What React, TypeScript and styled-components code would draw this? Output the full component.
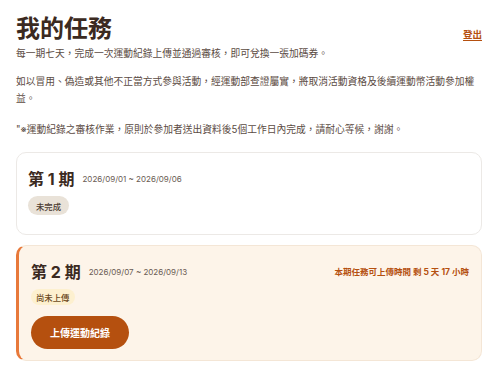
import React from "react";
import styled, { createGlobalStyle } from "styled-components";

const GlobalStyle = createGlobalStyle`
  html, body {
    margin: 0;
    padding: 0;
    background: #ffffff;
  }
  body {
    font-family: Inter, "Noto Sans CJK TC", sans-serif;
    -webkit-font-smoothing: antialiased;
  }
`;

const Page = styled.main`
  width: 500px;
  box-sizing: border-box;
  padding: 13px 18px 0 16px;
`;

const Header = styled.header`
  display: flex;
  justify-content: space-between;
  align-items: flex-end;
`;

const Title = styled.h1`
  margin: 0;
  font-size: 24px;
  line-height: 31px;
  font-weight: 700;
  color: #3b2a21;
`;

const Logout = styled.a`
  font-size: 9.5px;
  font-weight: 700;
  color: #b5500f;
  text-decoration: underline;
  text-underline-offset: 2px;
  margin-bottom: 3px;
  cursor: pointer;
`;

const Note = styled.p<{ $gap: number }>`
  margin: ${(p) => p.$gap}px 0 0;
  font-size: 9.75px;
  line-height: 17px;
  color: #5b4b43;
`;

const Card = styled.section<{ $active?: boolean }>`
  margin-top: ${(p) => (p.$active ? 10 : 14)}px;
  border-radius: 10px;
  box-sizing: border-box;
  padding: ${(p) => (p.$active ? "13px 12px 11px 12px" : "13px 12px 19px 11px")};
  border: 1px solid ${(p) => (p.$active ? "#f4e6d6" : "#ece9e6")};
  border-left: ${(p) => (p.$active ? "3px solid #e8793a" : "1px solid #ece9e6")};
  background: ${(p) => (p.$active ? "#fdf4e9" : "#ffffff")};
  display: flex;
  flex-direction: column;
  align-items: flex-start;
`;

const CardHead = styled.div`
  align-self: stretch;
  display: flex;
  align-items: center;
  height: 24px;
`;

const Period = styled.h2`
  margin: 0;
  font-size: 16px;
  font-weight: 700;
  color: #3b2a21;
  white-space: pre;
`;

const Dates = styled.span`
  margin-left: 8px;
  margin-top: 2px;
  font-size: 8px;
  color: #6a5b53;
`;

const Remaining = styled.span`
  margin-left: auto;
  font-size: 8.5px;
  font-weight: 700;
  color: #b5500f;
`;

const Badge = styled.span<{ $tone: "done" | "pending" }>`
  margin-top: 6px;
  display: inline-flex;
  align-items: center;
  height: ${(p) => (p.$tone === "done" ? 19 : 16)}px;
  padding: 0 ${(p) => (p.$tone === "done" ? 8 : 5)}px;
  border-radius: 10px;
  font-size: 8.4px;
  font-weight: 500;
  background: ${(p) => (p.$tone === "done" ? "#e9e2d8" : "#fdf0cf")};
  color: ${(p) => (p.$tone === "done" ? "#4a3a31" : "#6b4a1c")};
`;

const UploadButton = styled.button`
  margin-top: 11px;
  height: 33px;
  padding: 0 19px;
  border: none;
  border-radius: 17px;
  background: #b5500f;
  color: #ffffff;
  font-family: Inter, "Noto Sans CJK TC", sans-serif;
  font-size: 10px;
  font-weight: 700;
  cursor: pointer;
`;

const periods = [
  { no: 1, range: "2026/09/01 ~ 2026/09/06", status: "未完成", active: false },
  { no: 2, range: "2026/09/07 ~ 2026/09/13", status: "尚未上傳", active: true },
];

export default function App() {
  return (
    <>
      <GlobalStyle />
      <Page>
        <Header>
          <Title>我的任務</Title>
          <Logout>登出</Logout>
        </Header>
        <Note $gap={1}>每一期七天，完成一次運動紀錄上傳並通過審核，即可兌換一張加碼券。</Note>
        <Note $gap={11}>
          如以冒用、偽造或其他不正當方式參與活動，經運動部查證屬實，將取消活動資格及後續運動幣活動參加權益。
        </Note>
        <Note $gap={14}>"※運動紀錄之審核作業，原則於參加者送出資料後5個工作日內完成，請耐心等候，謝謝。</Note>
        {periods.map((p) => (
          <Card key={p.no} $active={p.active}>
            <CardHead>
              <Period>{`第 ${p.no} 期`}</Period>
              <Dates>{p.range}</Dates>
              {p.active && <Remaining>本期任務可上傳時間 剩 5 天 17 小時</Remaining>}
            </CardHead>
            <Badge $tone={p.active ? "pending" : "done"}>{p.status}</Badge>
            {p.active && <UploadButton>上傳運動紀錄</UploadButton>}
          </Card>
        ))}
      </Page>
    </>
  );
}
